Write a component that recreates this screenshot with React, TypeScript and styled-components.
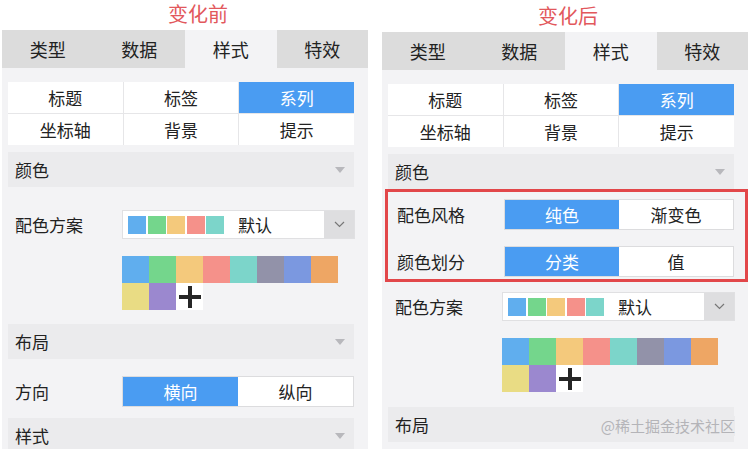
import React from "react";
import styled, { createGlobalStyle } from "styled-components";

const GlobalStyle = createGlobalStyle`
  html, body {
    margin: 0;
    padding: 0;
    background: #fff;
  }
  body {
    font-family: "Noto Sans CJK SC", "Noto Sans", sans-serif;
    color: #222;
  }
`;

const mainTabs = ["类型", "数据", "样式", "特效"];
const subTabs = ["标题", "标签", "系列", "坐标轴", "背景", "提示"];
const paletteColors = [
  "#60aeee",
  "#74d68c",
  "#f4c97c",
  "#f5918a",
  "#7cd5ca",
  "#9292a9",
  "#7b98e0",
  "#eea664",
  "#e9dc84",
  "#9b88cf",
];

function ArrowDown() {
  return (
    <svg width="10" height="6" viewBox="0 0 10 6">
      <polygon points="0,0 10,0 5,6" fill="#b8b8bc" />
    </svg>
  );
}

function Chevron() {
  return (
    <svg width="11" height="7" viewBox="0 0 11 7">
      <polyline
        points="1,1 5.5,5.5 10,1"
        fill="none"
        stroke="#777"
        strokeWidth="1.2"
      />
    </svg>
  );
}

function Plus() {
  return (
    <svg width="22" height="22" viewBox="0 0 22 22">
      <rect x="0" y="9" width="22" height="4" fill="#262626" />
      <rect x="9" y="0" width="4" height="22" fill="#262626" />
    </svg>
  );
}

function Toggle({ options, active }: { options: string[]; active: number }) {
  return (
    <ToggleBox>
      {options.map((o, i) => (
        <ToggleOpt key={o} $active={i === active}>
          {o}
        </ToggleOpt>
      ))}
    </ToggleBox>
  );
}

function SchemeSelect() {
  return (
    <SelectBox>
      <SelectSwatches>
        {paletteColors.slice(0, 5).map((c) => (
          <MiniSwatch key={c} $color={c} />
        ))}
      </SelectSwatches>
      <SelectText>默认</SelectText>
      <SelectButton>
        <Chevron />
      </SelectButton>
    </SelectBox>
  );
}

function Palette() {
  return (
    <PaletteGrid>
      {paletteColors.map((c) => (
        <Swatch key={c} $color={c} />
      ))}
      <AddCell>
        <Plus />
      </AddCell>
    </PaletteGrid>
  );
}

function Section({ title, top }: { title: string; top: number }) {
  return (
    <SectionHeader $top={top}>
      <span>{title}</span>
      <ArrowDown />
    </SectionHeader>
  );
}

function StylePanel({ after }: { after: boolean }) {
  return (
    <Panel>
      <TabBar>
        {mainTabs.map((t) => (
          <MainTab key={t} $active={t === "样式"}>
            {t}
          </MainTab>
        ))}
      </TabBar>
      <Content>
        <SubGrid>
          {subTabs.map((t) => (
            <SubCell key={t} $active={t === "系列"}>
              {t}
            </SubCell>
          ))}
        </SubGrid>
        <Section title="颜色" top={7} />
        {after && (
          <Highlight>
            <BoxRow>
              <BoxLabel>配色风格</BoxLabel>
              <Toggle options={["纯色", "渐变色"]} active={0} />
            </BoxRow>
            <BoxRow>
              <BoxLabel>颜色划分</BoxLabel>
              <Toggle options={["分类", "值"]} active={0} />
            </BoxRow>
          </Highlight>
        )}
        <FieldRow $top={after ? 10 : 23}>
          <Label>配色方案</Label>
          <SchemeSelect />
        </FieldRow>
        <Palette />
        <Section title="布局" top={after ? 15 : 14} />
        {!after && (
          <>
            <FieldRow $top={17}>
              <Label>方向</Label>
              <Toggle options={["横向", "纵向"]} active={0} />
            </FieldRow>
            <Section title="样式" top={11} />
          </>
        )}
      </Content>
    </Panel>
  );
}

export default function App() {
  return (
    <>
      <GlobalStyle />
      <Page>
        <Column>
          <Caption $offset={26}>变化前</Caption>
          <StylePanel after={false} />
        </Column>
        <Column $shift={2}>
          <Caption $offset={6}>变化后</Caption>
          <StylePanel after={true} />
        </Column>
        <Watermark>@稀土掘金技术社区</Watermark>
      </Page>
    </>
  );
}

const Page = styled.div`
  position: relative;
  display: flex;
  gap: 14px;
  padding-left: 2px;
  height: 449px;
  overflow: hidden;
`;

const Column = styled.div<{ $shift?: number }>`
  width: 366px;
  flex: none;
  display: flex;
  flex-direction: column;
  padding-top: ${({ $shift }) => $shift || 0}px;
`;

const Caption = styled.div<{ $offset: number }>`
  height: 30px;
  line-height: 28px;
  text-align: center;
  font-size: 20px;
  color: #e2585c;
  padding-left: ${({ $offset }) => $offset}px;
`;

const Panel = styled.div`
  flex: 1;
  background: #f3f3f5;
  overflow: hidden;
`;

const TabBar = styled.div`
  display: grid;
  grid-template-columns: repeat(4, 1fr);
  height: 38px;
`;

const MainTab = styled.div<{ $active?: boolean }>`
  display: flex;
  align-items: center;
  justify-content: center;
  font-size: 18px;
  background: ${({ $active }) => ($active ? "#f3f3f5" : "#dcdcdc")};
`;

const Content = styled.div`
  padding: 14px 14px 0 6px;
  display: flex;
  flex-direction: column;
`;

const SubGrid = styled.div`
  display: grid;
  grid-template-columns: repeat(3, 1fr);
  gap: 1px;
  background: #e6e6e8;
`;

const SubCell = styled.div<{ $active?: boolean }>`
  height: 31px;
  display: flex;
  align-items: center;
  justify-content: center;
  font-size: 17px;
  background: ${({ $active }) => ($active ? "#4a9cf2" : "#fff")};
  color: ${({ $active }) => ($active ? "#fff" : "#222")};
`;

const SectionHeader = styled.div<{ $top: number }>`
  margin-top: ${({ $top }) => $top}px;
  height: 35px;
  flex: none;
  display: flex;
  align-items: center;
  justify-content: space-between;
  padding: 0 9px 0 7px;
  background: #ebebed;
  font-size: 17px;
`;

const FieldRow = styled.div<{ $top: number }>`
  display: flex;
  align-items: center;
  margin-top: ${({ $top }) => $top}px;
`;

const Label = styled.div`
  width: 114px;
  flex: none;
  padding-left: 7px;
  box-sizing: border-box;
  font-size: 17px;
`;

const ToggleBox = styled.div`
  flex: 1;
  display: flex;
  height: 31px;
  box-sizing: border-box;
  border: 1px solid #dcdcde;
  background: #fff;
`;

const ToggleOpt = styled.div<{ $active?: boolean }>`
  flex: 1;
  display: flex;
  align-items: center;
  justify-content: center;
  font-size: 17px;
  background: ${({ $active }) => ($active ? "#4a9cf2" : "transparent")};
  color: ${({ $active }) => ($active ? "#fff" : "#222")};
`;

const SelectBox = styled.div`
  flex: 1;
  display: flex;
  align-items: center;
  height: 29px;
  margin-right: -1px;
  box-sizing: border-box;
  border: 1px solid #e0e0e2;
  background: #fff;
`;

const SelectSwatches = styled.div`
  display: flex;
  gap: 1.5px;
  padding-left: 5px;
`;

const MiniSwatch = styled.div<{ $color: string }>`
  width: 18px;
  height: 18px;
  background: ${({ $color }) => $color};
`;

const SelectText = styled.div`
  flex: 1;
  padding-left: 14px;
  font-size: 17px;
`;

const SelectButton = styled.div`
  width: 30px;
  align-self: stretch;
  display: flex;
  align-items: center;
  justify-content: center;
  background: #dedee0;
`;

const PaletteGrid = styled.div`
  display: grid;
  grid-template-columns: repeat(8, 27px);
  grid-auto-rows: 27px;
  margin: 17px 0 0 114px;
`;

const Swatch = styled.div<{ $color: string }>`
  background: ${({ $color }) => $color};
`;

const AddCell = styled.div`
  background: #fff;
  display: flex;
  align-items: center;
  justify-content: center;
`;

const Highlight = styled.div`
  margin: 0 -14px 0 -3px;
  border: 3px solid #e2474a;
  padding: 7px 11px 2px 9px;
  display: flex;
  flex-direction: column;
  gap: 16px;
`;

const BoxRow = styled.div`
  display: flex;
  align-items: center;
`;

const BoxLabel = styled.div`
  width: 107px;
  flex: none;
  font-size: 17px;
`;

const Watermark = styled.div`
  position: absolute;
  right: 14px;
  bottom: 13px;
  font-size: 15px;
  line-height: 20px;
  color: #b4b4b8;
  background: #ebebed;
  padding-left: 6px;
`;
